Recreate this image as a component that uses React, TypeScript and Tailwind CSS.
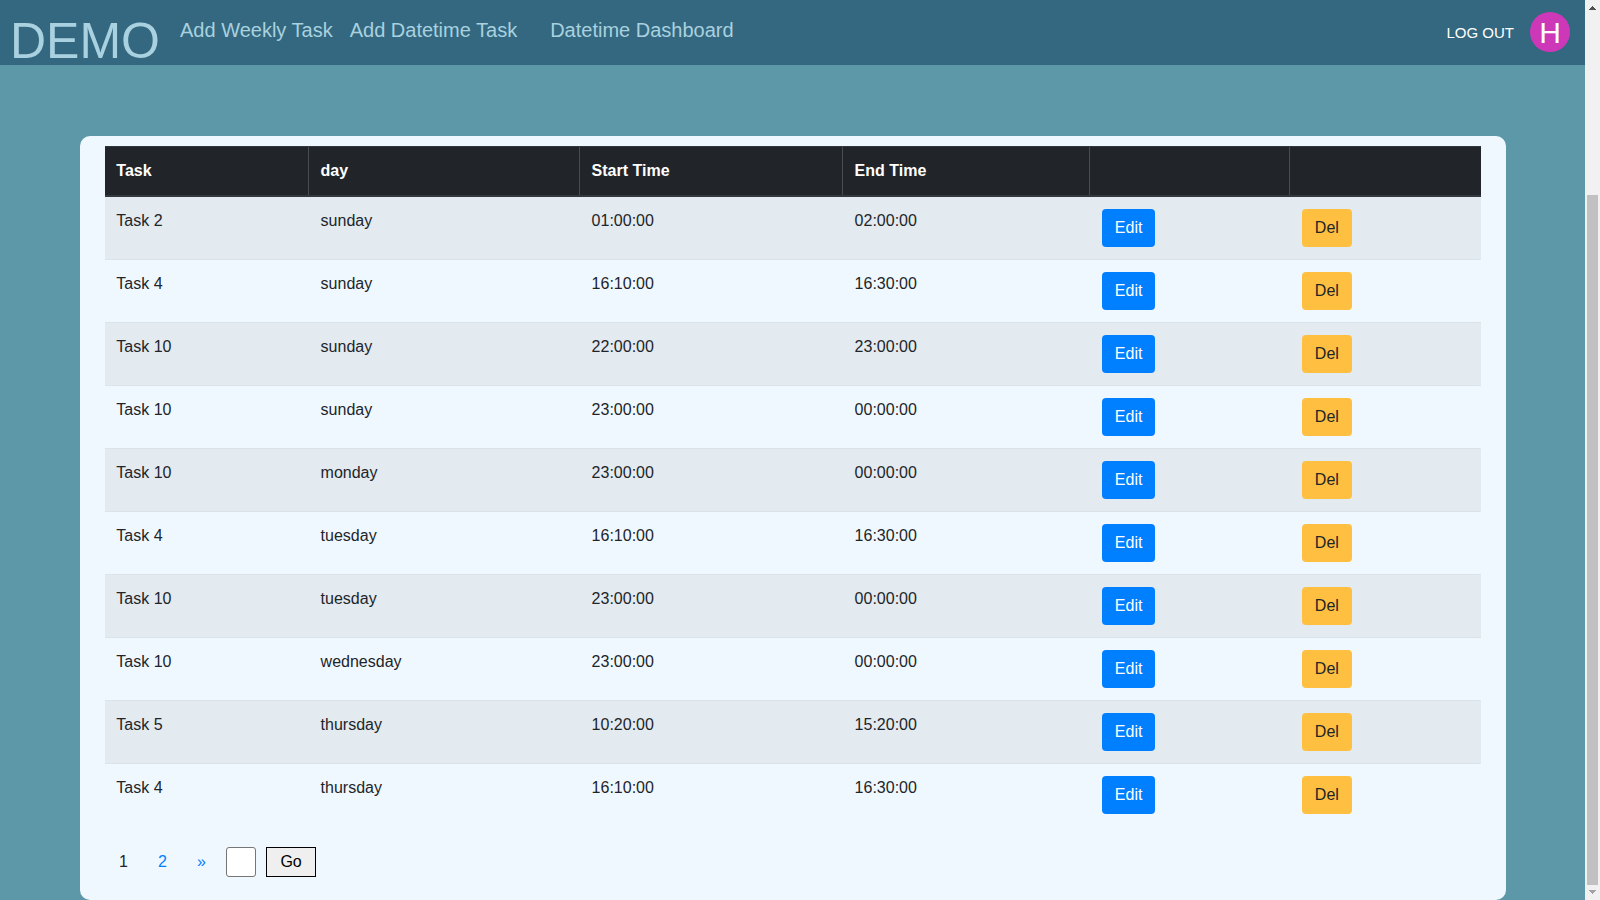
const tasks = [
  ["Task 2", "sunday", "01:00:00", "02:00:00"],
  ["Task 4", "sunday", "16:10:00", "16:30:00"],
  ["Task 10", "sunday", "22:00:00", "23:00:00"],
  ["Task 10", "sunday", "23:00:00", "00:00:00"],
  ["Task 10", "monday", "23:00:00", "00:00:00"],
  ["Task 4", "tuesday", "16:10:00", "16:30:00"],
  ["Task 10", "tuesday", "23:00:00", "00:00:00"],
  ["Task 10", "wednesday", "23:00:00", "00:00:00"],
  ["Task 5", "thursday", "10:20:00", "15:20:00"],
  ["Task 4", "thursday", "16:10:00", "16:30:00"],
];

const headings = ["Task", "day", "Start Time", "End Time", "", ""];

const columns = "grid grid-cols-[203.75px_271px_263px_247px_200px_minmax(0,1fr)]";

function NavBar() {
  return (
    <nav className="flex h-[65px] items-start bg-[#336880] text-[#a9d1df]">
      <div className="h-[65px] w-[180px] pl-[10px] pt-1 text-[50px] leading-[75px]">DEMO</div>
      <a className="pt-[15px] text-xl leading-[30px]">Add Weekly Task</a>
      <a className="ml-[17px] pt-[15px] text-xl leading-[30px]">Add Datetime Task</a>
      <a className="ml-[33px] pt-[15px] text-xl leading-[30px]">Datetime Dashboard</a>
      <div className="ml-auto flex h-[65px] items-start pr-[15px] text-white">
        <a className="mr-4 mt-[22px] text-[15px] leading-[22px]">LOG OUT</a>
        <div className="mt-3 flex size-10 items-center justify-center rounded-full bg-[#cd38b8] text-[30px] leading-none">
          <span className="pt-[2px]">H</span>
        </div>
      </div>
    </nav>
  );
}

function TaskTable() {
  return (
    <div>
      <div className={`${columns} h-[51px] border-b-2 border-t border-b-[#32383e] border-t-[#32383e] bg-[#212529] font-bold text-white`}>
        {headings.map((heading, i) => (
          <div
            key={i}
            className={i === 0 ? "pl-[11.75px] pt-3" : "border-l border-[#454d55] pl-[11.25px] pt-3"}
          >
            {heading}
          </div>
        ))}
      </div>
      {tasks.map(([task, day, start, end], i) => (
        <div
          key={i}
          className={`${columns} ${i === 0 ? "h-[62px]" : "h-[63px] border-t border-[#dbe2e8]"} ${i % 2 === 0 ? "bg-[#e3eaf0]" : ""}`}
        >
          <div className="pl-[11.75px] pt-3">{task}</div>
          <div className="pl-[12.25px] pt-3">{day}</div>
          <div className="pl-[12.25px] pt-3">{start}</div>
          <div className="pl-[12.25px] pt-3">{end}</div>
          <div className="pl-[12.5px] pt-3">
            <button className="h-[38px] rounded bg-[#0080ff] px-[13px] text-white">Edit</button>
          </div>
          <div className="pl-[12.5px] pt-3">
            <button className="h-[38px] rounded bg-[#ffbf40] px-[13px]">Del</button>
          </div>
        </div>
      ))}
    </div>
  );
}

function Pager() {
  return (
    <div className="flex h-[30px] items-center text-[#0080ff]">
      <span className="ml-[14.5px] w-[39px] text-[#212529]">1</span>
      <a className="w-[39px]">2</a>
      <a className="w-[29px]">»</a>
      <input aria-label="Page" className="h-[30px] w-[30px] rounded-[3px] border border-[#767676] bg-white" />
      <button className="ml-[10px] h-[30px] w-[50px] border border-black bg-[#efefef] text-black">Go</button>
    </div>
  );
}

function ScrollBar() {
  return (
    <div className="flex h-full w-[15px] flex-col items-center bg-[#f1f1f1]">
      <svg className="h-[15px] w-[15px] shrink-0" viewBox="0 0 15 15" shapeRendering="crispEdges">
        <path d="M7 6h1v1h1v1h1v1h1v1H4V9h1V8h1V7h1z" fill="#505050" />
      </svg>
      <div className="mt-[180px] h-[690px] w-[11px] bg-[#c1c1c1]" />
      <svg className="h-[15px] w-[15px] shrink-0" viewBox="0 0 15 15" shapeRendering="crispEdges">
        <path d="M4 5h7v1h-1v1H9v1H8v1H7V8H6V7H5V6H4z" fill="#a3a3a3" />
      </svg>
    </div>
  );
}

export default function App() {
  return (
    <div className="flex h-[900px] w-[1600px] overflow-hidden bg-[#5d98a8] font-['Liberation_Sans',Arial,sans-serif] text-base leading-6 text-[#212529]">
      <div className="h-full w-[1585px]">
        <NavBar />
        <main className="ml-[79.6px] mr-[79.25px] mt-[71px] h-[764px] rounded-[10px] bg-[#f0f8ff] px-[25px] pt-[10px]">
          <TaskTable />
          <div className="mt-[21px]">
            <Pager />
          </div>
        </main>
      </div>
      <ScrollBar />
    </div>
  );
}
